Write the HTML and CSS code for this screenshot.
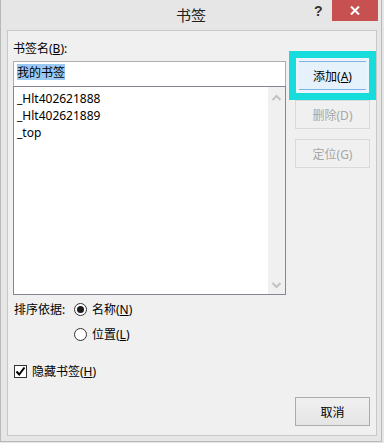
FILE: index.html
```html
<!DOCTYPE html>
<html lang="zh-CN">
<head>
  <meta charset="UTF-8">
  <meta name="viewport" content="width=device-width, initial-scale=1.0">
  <title>书签</title>
  <link rel="stylesheet" href="styles.css">
</head>
<body>
  <div class="window">
    <div class="titlebar">
      <span class="title">书签</span>
      <span class="help">?</span>
      <span class="close">
        <svg width="10" height="9" viewBox="0 0 10 9"><path d="M1 0.5 L9 8.5 M9 0.5 L1 8.5" stroke="#fff" stroke-width="2"/></svg>
      </span>
    </div>

    <div class="panel">
      <div class="main">
        <div class="left-col">
          <div class="label">书签名(<u>B</u>):</div>
          <div class="name-input"><span class="selected">我的书签</span></div>
          <div class="list">
            <div class="items">
              <div>_Hlt402621888</div>
              <div>_Hlt402621889</div>
              <div>_top</div>
            </div>
            <div class="scrollbar">
              <svg width="17" height="10" viewBox="0 0 17 10"><path d="M4.5 7 L8.5 3 L12.5 7" stroke="#c2c2c2" stroke-width="2" fill="none"/></svg>
              <svg width="17" height="10" viewBox="0 0 17 10"><path d="M4.5 3 L8.5 7 L12.5 3" stroke="#c2c2c2" stroke-width="2" fill="none"/></svg>
            </div>
          </div>
        </div>
        <div class="right-col">
          <div class="btn btn-focus"><span>添加(<u>A</u>)</span></div>
          <div class="btn btn-disabled"><span>删除(D)</span></div>
          <div class="btn btn-disabled"><span>定位(G)</span></div>
        </div>
      </div>

      <div class="sort">
        <div class="sort-label">排序依据:</div>
        <div class="radios">
          <div class="option"><span class="radio checked"></span><span>名称(<u>N</u>)</span></div>
          <div class="option"><span class="radio"></span><span>位置(<u>L</u>)</span></div>
        </div>
      </div>

      <div class="option check-row">
        <span class="checkbox">
          <svg width="11" height="11" viewBox="0 0 11 11"><path d="M1.5 5.5 L4.2 8.5 L9.5 1.5" stroke="#000" stroke-width="2" fill="none"/></svg>
        </span>
        <span>隐藏书签(<u>H</u>)</span>
      </div>

      <div class="footer">
        <div class="btn"><span>取消</span></div>
      </div>
    </div>
  </div>
</body>
</html>
```

FILE: styles.css
```css
body {
  margin: 0;
  background: #e6e6e6;
  font-family: "Noto Sans", "Noto Sans CJK SC", sans-serif;
  font-size: 12px;
  color: #000;
}
u {
  text-decoration-thickness: 1px;
  text-underline-offset: 1px;
}
.window {
  width: 380px;
  height: 441px;
  background: #e6e6e6;
  border: 1px solid #b9b9b9;
  border-top: none;
  display: flex;
  flex-direction: column;
}
.titlebar {
  height: 30px;
  position: relative;
  display: flex;
  justify-content: center;
}
.title {
  font-family: "Noto Sans CJK SC", sans-serif;
  font-size: 15px;
  line-height: 30px;
  color: #222;
}
.help {
  position: absolute;
  left: 313px;
  top: 2px;
  font-family: "Liberation Sans", sans-serif;
  font-weight: bold;
  font-size: 14px;
  line-height: 18px;
  color: #333;
}
.close {
  position: absolute;
  left: 331px;
  top: 0;
  width: 46px;
  height: 21px;
  background: #c75050;
  display: flex;
  align-items: center;
  justify-content: center;
}
.panel {
  flex: 1;
  margin: 0 4px 5px 6px;
  background: #f0f0f0;
  border: 1px solid #c8c8c8;
  padding: 9px 6px 0 5px;
  display: flex;
  flex-direction: column;
}
.main {
  display: flex;
  gap: 9px;
}
.left-col {
  width: 273px;
}
.label {
  line-height: 17px;
  margin-bottom: 4px;
}
.name-input {
  background: #fff;
  border: 1px solid #abadb3;
  border-bottom: none;
  padding: 2px 0 0 3px;
  box-sizing: border-box;
  height: 25px;
}
.selected {
  display: inline-block;
  background: #99c9f3;
  line-height: 16px;
  font-family: "Noto Sans CJK SC", sans-serif;
}
.list {
  height: 209px;
  box-sizing: border-box;
  background: #fff;
  border: 1px solid #828790;
  display: flex;
}
.items {
  flex: 1;
  padding: 3px 0 0 3px;
  line-height: 17px;
}
.scrollbar {
  width: 17px;
  background: #f0f0f0;
  display: flex;
  flex-direction: column;
  justify-content: space-between;
  padding: 6px 0 4px;
}
.right-col {
  width: 75px;
  padding-top: 21px;
  display: flex;
  flex-direction: column;
  gap: 10px;
}
.btn {
  width: 75px;
  height: 29px;
  box-sizing: border-box;
  border: 1px solid #acacac;
  background: linear-gradient(#f0f0f0, #e5e5e5);
  display: flex;
  align-items: center;
  justify-content: center;
}
.btn-focus {
  position: relative;
  background: #e5f1fb;
  border-color: #7eb4ea;
}
.btn-focus::after {
  content: "";
  position: absolute;
  top: -11px;
  left: -7px;
  right: -7px;
  bottom: -11px;
  border: 7px solid #17dcdc;
  box-shadow: inset 0 0 0 3px #eaf3fc;
}
.btn-disabled {
  background: #f0f0f0;
  border-color: #d9d9d9;
  color: #a6a6a6;
}
.sort {
  display: flex;
  margin: 6px 0 0 1px;
}
.sort-label {
  width: 60px;
  line-height: 17px;
}
.radios {
  display: flex;
  flex-direction: column;
  gap: 8px;
}
.option {
  display: flex;
  align-items: center;
  line-height: 17px;
  gap: 5px;
}
.radio {
  width: 13px;
  height: 13px;
  box-sizing: border-box;
  border: 1px solid #333;
  border-radius: 50%;
  background: #fff;
  display: flex;
  align-items: center;
  justify-content: center;
}
.radio.checked::before {
  content: "";
  width: 7px;
  height: 7px;
  border-radius: 50%;
  background: #1a1a1a;
}
.check-row {
  margin: 20px 0 0 1px;
}
.checkbox {
  width: 13px;
  height: 13px;
  box-sizing: border-box;
  border: 1px solid #333;
  background: #fff;
  display: flex;
  align-items: center;
  justify-content: center;
}
.footer {
  display: flex;
  justify-content: flex-end;
  margin-top: 17px;
}
```
